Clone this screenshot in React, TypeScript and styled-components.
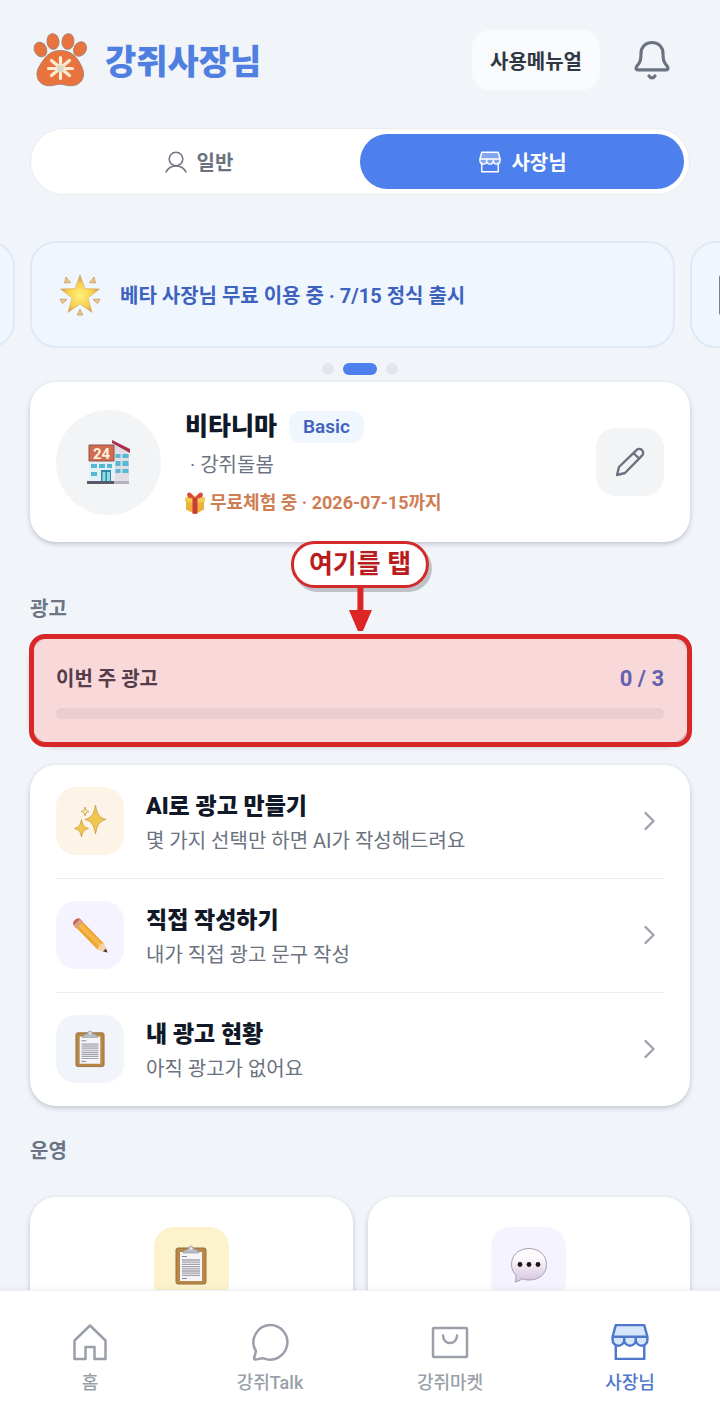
import React from "react";
import styled, { createGlobalStyle, css } from "styled-components";

const GlobalStyle = createGlobalStyle`
  *, *::before, *::after { box-sizing: border-box; }
  body {
    margin: 0;
    background: #f1f5fa;
    color: #111827;
    font-family: Roboto, "Noto Sans CJK KR", sans-serif;
    font-size: 20px;
  }
  button { font: inherit; color: inherit; border: 0; padding: 0; cursor: pointer; }
  a { color: inherit; text-decoration: none; }
  h1, h2, h3, p { margin: 0; }
  svg { display: block; flex: none; }
`;

const cardSurface = css`
  background: #fff;
  border-radius: 26px;
  box-shadow: 0 2px 5px rgba(30, 41, 59, 0.24);
`;

const Shell = styled.div`
  display: flex;
  flex-direction: column;
  height: 100vh;
`;

const Content = styled.main`
  flex: 1;
  min-height: 0;
  overflow-x: hidden;
  overflow-y: auto;
  scrollbar-width: none;
  padding: 30px 30px 0;
`;

const Header = styled.header`
  display: flex;
  align-items: center;
  justify-content: space-between;
`;

const Brand = styled.div`
  display: flex;
  align-items: center;
  gap: 16px;
  padding-left: 2px;
`;

const BrandName = styled.h1`
  padding-top: 4px;
  font-size: 34px;
  line-height: 44px;
  font-weight: 900;
  color: #4f7fe0;
`;

const HeaderActions = styled.div`
  display: flex;
  align-items: center;
  gap: 30px;
  padding-right: 16px;
`;

const ManualButton = styled.button`
  height: 60px;
  padding: 0 18px;
  border-radius: 18px;
  background: #f9fafb;
  color: #2f3744;
  font-weight: 700;
`;

const IconButton = styled.button`
  display: grid;
  place-items: center;
  width: 44px;
  height: 44px;
  background: none;
`;

const Segmented = styled.div`
  display: grid;
  grid-template-columns: 1fr 1fr;
  margin-top: 38px;
  padding: 5px;
  border: 1px solid #e8ebf0;
  border-radius: 34px;
  background: #fff;
`;

const Segment = styled.button<{ $active?: boolean }>`
  display: flex;
  align-items: center;
  justify-content: center;
  gap: 10px;
  height: 55px;
  padding-left: 2px;
  border-radius: 28px;
  font-weight: 700;
  background: ${(p) => (p.$active ? "#4d80ec" : "transparent")};
  color: ${(p) => (p.$active ? "#fff" : "#6b7280")};
`;

const Carousel = styled.section`
  margin-top: 46px;
`;

const Track = styled.div`
  display: grid;
  grid-auto-flow: column;
  grid-auto-columns: calc(100% - 15px);
  gap: 15px;
  transform: translateX(-100%);
`;

const Slide = styled.article`
  display: flex;
  align-items: center;
  gap: 19px;
  height: 107px;
  padding: 0 27px;
  border: 2px solid #dfe9f6;
  border-radius: 26px;
  background: #eff6fe;
  color: #3d62c0;
  font-weight: 700;
`;

const Dots = styled.div`
  display: flex;
  justify-content: center;
  gap: 9px;
  margin: 15px 0 7px;
`;

const Dot = styled.button<{ $active?: boolean }>`
  width: ${(p) => (p.$active ? 34 : 12)}px;
  height: 12px;
  border-radius: 6px;
  background: ${(p) => (p.$active ? "#4d80ec" : "#e3e7ec")};
`;

const ProfileCard = styled.section`
  ${cardSurface}
  display: flex;
  align-items: center;
  height: 160px;
  padding: 0 26px;
`;

const Avatar = styled.div`
  display: grid;
  place-items: center;
  width: 105px;
  height: 105px;
  border-radius: 50%;
  background: #f3f4f6;
`;

const ProfileText = styled.div`
  flex: 1;
  display: grid;
  gap: 4px;
  margin-left: 24px;
  padding-top: 6px;
`;

const NameRow = styled.div`
  display: flex;
  align-items: center;
  gap: 12px;
  line-height: 34px;
`;

const Name = styled.h2`
  font-size: 25px;
  line-height: 34px;
  font-weight: 900;
`;

const Badge = styled.span`
  padding: 0 14px;
  border-radius: 12px;
  background: #eff6fe;
  color: #4263bd;
  font-size: 19px;
  line-height: 32px;
  font-weight: 600;
`;

const Category = styled.p`
  padding-left: 5px;
  line-height: 34px;
  color: #6b7280;
`;

const Trial = styled.p`
  display: flex;
  align-items: center;
  gap: 5px;
  line-height: 34px;
  font-size: 18px;
  font-weight: 700;
  color: #cf7d52;
`;

const EditButton = styled.button`
  display: grid;
  place-items: center;
  width: 68px;
  height: 68px;
  border-radius: 20px;
  background: #f3f4f6;
`;

const SectionTitle = styled.h2<{ $tall?: boolean }>`
  margin: ${(p) => (p.$tall ? "30px 0 31px" : "52px 0 12px")};
  line-height: 30px;
  font-size: 20px;
  font-weight: 700;
  color: #6b7585;
`;

const QuotaCard = styled.section`
  ${cardSurface}
  position: relative;
  height: 109px;
  padding: 27px 26px 0;
`;

const QuotaHead = styled.div`
  display: flex;
  justify-content: space-between;
  line-height: 32px;
  font-weight: 700;
  color: #374151;
`;

const QuotaCount = styled.span`
  font-size: 22px;
  color: #4a70cf;
`;

const QuotaBar = styled.div`
  height: 11px;
  margin-top: 13px;
  border-radius: 6px;
  background: #f0f1f4;
`;

const Spotlight = styled.div`
  position: absolute;
  inset: -2px -2px -2px -1px;
  border: 5px solid #d92626;
  border-radius: 16px;
  background: rgba(217, 38, 46, 0.18);
`;

const Callout = styled.div`
  position: absolute;
  left: 50%;
  bottom: 100%;
  transform: translateX(-50%);
  display: flex;
  flex-direction: column;
  align-items: center;
  margin-bottom: 5px;
`;

const CalloutLabel = styled.span`
  padding: 0 15px;
  border: 3px solid #d32a2a;
  border-radius: 24px;
  background: #fff;
  box-shadow: 3px 4px 0 #bfc2c7;
  color: #b91c1c;
  font-size: 26px;
  line-height: 41px;
  font-weight: 700;
  white-space: nowrap;
`;

const MenuCard = styled.ul`
  ${cardSurface}
  list-style: none;
  margin: 20px 0 0;
  padding: 0 26px;
`;

const MenuItem = styled.li`
  & + & { border-top: 1px solid #eceef1; }
`;

const MenuLink = styled.a`
  display: flex;
  align-items: center;
  gap: 22px;
  padding: 19px 6px 20px 0;
`;

const Tile = styled.span<{ $tint: string; $large?: boolean }>`
  display: grid;
  place-items: center;
  width: ${(p) => (p.$large ? 75 : 68)}px;
  height: ${(p) => (p.$large ? 75 : 68)}px;
  border-radius: 20px;
  background: ${(p) => p.$tint};
`;

const MenuText = styled.span`
  flex: 1;
  display: grid;
  padding-top: 6px;
`;

const MenuTitle = styled.strong`
  font-size: 23px;
  line-height: 34px;
  font-weight: 900;
`;

const MenuNote = styled.span`
  line-height: 34px;
  color: #6b7280;
`;

const OpsGrid = styled.div`
  display: grid;
  grid-template-columns: 1fr 1fr;
  gap: 15px;
`;

const OpsCard = styled.a`
  ${cardSurface}
  display: grid;
  justify-items: center;
  padding: 30px 20px;
`;

const TabBar = styled.nav`
  position: relative;
  display: grid;
  grid-template-columns: repeat(4, 1fr);
  height: 120px;
  padding-top: 32px;
  border-top: 1px solid #eef0f3;
  background: #fff;
  box-shadow: 0 -2px 5px rgba(30, 41, 59, 0.05);
`;

const Tab = styled.a<{ $active?: boolean }>`
  display: flex;
  flex-direction: column;
  align-items: center;
  gap: 8px;
  font-size: 18px;
  line-height: 28px;
  font-weight: 500;
  color: ${(p) => (p.$active ? "#4f78cb" : "#9a9fa9")};
`;

const PawLogo = () => (
  <svg width="57" height="56" viewBox="0 0 57 56" aria-hidden="true">
    <g fill="#e9733f" stroke="#a9826c" strokeWidth="1">
      <ellipse cx="8.500" cy="17.500" rx="6" ry="7.500" transform="rotate(-28 8.500 17.500)" />
      <ellipse cx="21" cy="9.500" rx="6" ry="7.800" transform="rotate(-8 21 9.500)" />
      <ellipse cx="36" cy="9.500" rx="6" ry="7.800" transform="rotate(8 36 9.500)" />
      <ellipse cx="48" cy="17" rx="6" ry="7.500" transform="rotate(32 48 17)" />
      <path d="M28.500 18.500c-8 0-13.500 4-17 9.500C7.500 33.500 5 37.500 5 42c0 7.500 5.500 11.800 12.500 11.800 4.500 0 6.500-1.600 10.500-1.600s6 1.600 10.500 1.600C46 53.800 51.500 49.500 51.500 42c0-4.500-2-8.500-5.500-14-3.500-5.500-9.500-9.500-17.500-9.500z" />
    </g>
    <g stroke="#fbecd2" strokeWidth="3.200" strokeLinecap="round">
      <path d="M28.500 25.500v21M16.500 36.500h24M19.500 28.500l18 15M37.500 28.500l-18 15" />
    </g>
    <circle cx="28.500" cy="36.500" r="3.500" fill="#d9d9c5" />
  </svg>
);

const BellIcon = () => (
  <svg width="40" height="42" viewBox="0 0 40 42" fill="none" stroke="#6b7280" strokeWidth="3.200" strokeLinecap="round" strokeLinejoin="round" aria-hidden="true">
    <path d="M20 3.500C13 3.500 9 8.500 9 14.500c0 7-1 9-4 12.500-1.800 2.200-1.200 3.800 1 3.800h28c2.200 0 2.800-1.600 1-3.800-3-3.500-4-5.500-4-12.500 0-6-4-11-11-11z" />
    <path d="M17 37c1.500 2.600 4.500 2.600 6 0" />
  </svg>
);

const PersonIcon = () => (
  <svg width="22" height="22" viewBox="0 0 22 22" fill="none" stroke="currentColor" strokeWidth="1.500" strokeLinecap="round" aria-hidden="true">
    <circle cx="11" cy="8" r="6.800" />
    <path d="M1 21c2-4 5.500-6 10-6s8 2 10 6" />
  </svg>
);

const StoreIcon = ({ size, tint }: { size: number; tint: string }) => (
  <svg width={size} height={size} viewBox="0 0 36 36" fill="none" stroke="currentColor" strokeWidth="2.300" strokeLinejoin="round" aria-hidden="true">
    <path d="M4.500 19v15h27V19" />
    <path d="M4.500 2h27l3 11v3a5 5 0 0 1-11 0 5.500 5.500 0 0 1-11 0 5 5 0 0 1-11 0v-3z" fill={tint} />
    <path d="M1.500 13h33M12.500 13v3M23.500 13v3" />
  </svg>
);

const HomeIcon = () => (
  <svg width="36" height="38" viewBox="0 0 36 38" fill="none" stroke="currentColor" strokeWidth="2.500" strokeLinejoin="round" aria-hidden="true">
    <path d="M2.500 17.500 18 2.500l15.500 15V36h-11V24h-9v12h-11z" />
  </svg>
);

const TalkIcon = () => (
  <svg width="38" height="38" viewBox="0 0 38 38" fill="none" stroke="currentColor" strokeWidth="2.500" strokeLinejoin="round" aria-hidden="true">
    <path d="M19 2a17.300 17.300 0 1 1-6.500 33.300c-2.800-.6-6 1.700-8.500 1.200-2.500-.6.800-4.500.8-8.500A17.300 17.300 0 0 1 19 2z" />
  </svg>
);

const MarketIcon = () => (
  <svg width="38" height="38" viewBox="0 0 38 38" fill="none" stroke="currentColor" strokeWidth="2.500" strokeLinejoin="round" strokeLinecap="round" aria-hidden="true">
    <rect x="2" y="5" width="34" height="29" rx="1" />
    <path d="M12 12.500c0 10 14 10 14 0" />
  </svg>
);

const EditIcon = () => (
  <svg width="30" height="30" viewBox="0 0 30 30" fill="none" stroke="#6b7280" strokeWidth="2.400" strokeLinejoin="round" strokeLinecap="round" aria-hidden="true">
    <path d="M4 20 21.500 3.200a3.800 3.800 0 0 1 5.500 5.500L10 26l-8 2zM19 6.500l5 5" />
  </svg>
);

const Chevron = () => (
  <svg width="18" height="22" viewBox="0 0 18 22" fill="none" stroke="#9ca3af" strokeWidth="2.400" strokeLinecap="round" strokeLinejoin="round" aria-hidden="true">
    <path d="m5.500 3 8 8-8 8" />
  </svg>
);

const StarEmoji = () => (
  <svg width="42" height="42" viewBox="0 0 42 42" aria-hidden="true">
    <defs>
      <radialGradient id="star" cx="50%" cy="55%" r="55%">
        <stop offset="0" stopColor="#fff07a" />
        <stop offset=".6" stopColor="#f8cf4e" />
        <stop offset="1" stopColor="#c98b42" />
      </radialGradient>
    </defs>
    <path d="m21 1 5 13.500 14.500.5L29 24l4 14.500-12-8.500L9 38.500 13 24 1.500 15l14.500-.5z" fill="url(#star)" stroke="#d7a053" strokeWidth=".5" />
    <g fill="#edc98b" stroke="#c99858" strokeWidth=".8" strokeLinejoin="round">
      <path d="m7 3 4.500 5.500L5.500 9zM35 3l-4.500 5.500 6 .5zM1 25l7 .5-4.500 4zM41 25l-7 .5 4.500 4zM21 35.500l2.800 5.500h-5.600z" />
    </g>
  </svg>
);

const StoreEmoji = () => (
  <svg width="44" height="46" viewBox="0 0 44 46" aria-hidden="true">
    <path d="M27 4v40h15V13z" fill="#e1dde7" />
    <path d="M2 20h26v23H2z" fill="#e4f0f6" />
    <path d="M2 6h25v16H2z" fill="#d36c4f" stroke="#8a5448" strokeWidth="1" />
    <path d="m25 1 18 9v4L25 4z" fill="#ab304d" />
    <text x="14.500" y="19.500" textAnchor="middle" fontSize="15" fontWeight="700" fill="#fff3df">24</text>
    <g fill="#55b9d3">
      <path d="M4 25h6v4H4zM12 25h6v4h-6zM20 25h5v4h-5zM4 33h6v4H4zM28.500 15h5v4h-5zM35.500 15h6v4h-6zM28.500 22h5v5h-5zM35.500 22h6v5h-6zM28.500 30h5v4h-5zM35.500 30h6v4h-6z" />
    </g>
    <path d="M14 31h10v12H14z" fill="#3487a7" />
    <path d="M15.500 33h3v9h-3zM20 33h3v9h-3z" fill="#8edbea" />
    <path d="M0 42h27v3H0z" fill="#555b68" />
    <path d="M27 42h15v3H27z" fill="#b7b0bf" />
  </svg>
);

const GiftEmoji = () => (
  <svg width="20" height="22" viewBox="0 0 20 22" aria-hidden="true">
    <path d="M1 7.500 10 10l9-2.500v10L10 22l-9-4.500z" fill="#eeb03c" />
    <path d="m0 5.500 10-2 10 2v4L10 12 0 9.500z" fill="#f5c84f" />
    <path d="M7.500 6h5v15.500L10 22l-2.500-.5z" fill="#c93c35" />
    <path d="M10 6C5-2 1 0 2.500 4.500 4 7 8 6 10 6zM10 6c5-8 9-6 7.500-1.500C16 7 12 6 10 6z" fill="#d94a3b" />
  </svg>
);

const SparklesEmoji = () => (
  <svg width="34" height="34" viewBox="0 0 34 34" fill="#f0c64f" stroke="#c69b4a" strokeWidth=".8" strokeLinejoin="round" aria-hidden="true">
    <path d="M22.500 1c1.500 9 3.500 12.500 10.500 14.500-7 2-9 5.500-10.500 14.500-1.500-9-3.500-12.500-10.500-14.500 7-2 9-5.500 10.500-14.500z" />
    <path d="M8.500 15.500c1 5.500 2.500 7.500 7 9-4.500 1.500-6 3.300-7 8.500-1-5.200-2.500-7-7-8.500 4.500-1.500 6-3.500 7-9z" />
    <path d="M12 3c.6 3 1.400 4 4 4.500-2.600.5-3.400 1.500-4 4.500-.6-3-1.400-4-4-4.500 2.600-.5 3.400-1.500 4-4.500z" fill="#fae6a6" />
  </svg>
);

const PencilEmoji = () => (
  <svg width="38" height="38" viewBox="0 0 38 38" aria-hidden="true">
    <path d="M8.500 2.500 32.500 27l4 9.500-10-3L2.500 9z" fill="#f0a334" />
    <path d="m7 4 25 25-3 3L4 7z" fill="#f7bf4f" opacity=".7" />
    <path d="M2.500 9C.5 6.500 5 1.500 8.500 2.500l3 3L5.500 12z" fill="#c76555" />
    <path d="m9 3 3 3-6.500 6.500-3-3z" fill="#d7a283" />
    <path d="m32.500 27 4 9.500-10-3c.5-3 3-6 6-6.500z" fill="#f3d4a0" />
    <path d="m35 32.500 1.500 4-4.500-1z" fill="#493e42" />
  </svg>
);

const ClipboardEmoji = ({ size }: { size: number }) => (
  <svg width={size} height={size * 1.25} viewBox="0 0 32 40" aria-hidden="true">
    <rect x="1" y="3" width="30" height="36" rx="2" fill="#b98745" stroke="#98703f" />
    <path d="M5 7h22v29H5z" fill="#f5f4f8" />
    <path d="M8 8c0-3 3-3 5-4 1-4 5-4 6 0 2 1 5 1 5 4z" fill="#b8bcc5" stroke="#9296a0" strokeWidth=".6" />
    <circle cx="16" cy="3.500" r="1.200" fill="#eceef2" />
    <path d="M7 11.500h5M7 33.500h5" stroke="#858492" strokeWidth="1" />
    <path d="M7 15h18M7 17.200h18M7 19.400h18M7 21.600h18M7 23.800h18M7 26h18M7 28.200h18M7 30.400h18" stroke="#a4a2ad" strokeWidth="1.300" />
  </svg>
);

const SpeechEmoji = () => (
  <svg width="38" height="36" viewBox="0 0 38 36" aria-hidden="true">
    <defs>
      <linearGradient id="speech" x1="0" y1="0" x2="0" y2="1">
        <stop offset=".3" stopColor="#fbf9fc" />
        <stop offset="1" stopColor="#d5c2dd" />
      </linearGradient>
    </defs>
    <path d="M19 1.500c10 0 17.500 6.500 17.500 16S29 33 19 33c-2.500 0-5-.4-7-1.200-1.800 1.600-4.500 2.900-7 3.200 1-2.200 1.300-4.500.8-7C3 25 1.500 21.500 1.500 17.500c0-9.500 7.500-16 17.500-16z" fill="url(#speech)" stroke="#a9a2ad" />
    <g fill="#191719"><circle cx="10" cy="17.500" r="2.400" /><circle cx="19" cy="17.500" r="2.400" /><circle cx="28" cy="17.500" r="2.400" /></g>
  </svg>
);

const PhoneEmoji = () => (
  <svg width="42" height="42" viewBox="0 0 42 42" aria-hidden="true">
    <rect x="0" y="1" width="40" height="40" rx="2" fill="#7d8289" />
  </svg>
);

const ArrowDown = () => (
  <svg width="23" height="43" viewBox="0 0 23 43" fill="#dc2626" aria-hidden="true">
    <path d="M8.500 0h6v22H23L14 43H9L0 22h8.500z" />
  </svg>
);

const menu = [
  { title: "AI로 광고 만들기", note: "몇 가지 선택만 하면 AI가 작성해드려요", tint: "#fdf3e6", icon: <SparklesEmoji /> },
  { title: "직접 작성하기", note: "내가 직접 광고 문구 작성", tint: "#f5f3ff", icon: <PencilEmoji /> },
  { title: "내 광고 현황", note: "아직 광고가 없어요", tint: "#f1f5fa", icon: <ClipboardEmoji size={30} /> },
];

const tabs = [
  { label: "홈", icon: <HomeIcon /> },
  { label: "강쥐Talk", icon: <TalkIcon /> },
  { label: "강쥐마켓", icon: <MarketIcon /> },
  { label: "사장님", icon: <StoreIcon size={38} tint="#d6e6fb" />, active: true },
];

export default function App() {
  return (
    <Shell>
      <GlobalStyle />
      <Content>
        <Header>
          <Brand>
            <PawLogo />
            <BrandName>강쥐사장님</BrandName>
          </Brand>
          <HeaderActions>
            <ManualButton type="button">사용메뉴얼</ManualButton>
            <IconButton type="button" aria-label="알림">
              <BellIcon />
            </IconButton>
          </HeaderActions>
        </Header>

        <Segmented>
          <Segment type="button" aria-pressed="false">
            <PersonIcon />
            일반
          </Segment>
          <Segment type="button" aria-pressed="true" $active>
            <StoreIcon size={22} tint="rgba(255,255,255,0.3)" />
            사장님
          </Segment>
        </Segmented>

        <Carousel>
          <Track>
            <Slide />
            <Slide>
              <StarEmoji />
              <p>베타 사장님 무료 이용 중 · 7/15 정식 출시</p>
            </Slide>
            <Slide>
              <PhoneEmoji />
            </Slide>
          </Track>
          <Dots>
            <Dot type="button" aria-label="1" />
            <Dot type="button" aria-label="2" $active />
            <Dot type="button" aria-label="3" />
          </Dots>
        </Carousel>

        <ProfileCard>
          <Avatar>
            <StoreEmoji />
          </Avatar>
          <ProfileText>
            <NameRow>
              <Name>비타니마</Name>
              <Badge>Basic</Badge>
            </NameRow>
            <Category>· 강쥐돌봄</Category>
            <Trial>
              <GiftEmoji />
              무료체험 중 · 2026-07-15까지
            </Trial>
          </ProfileText>
          <EditButton type="button" aria-label="수정">
            <EditIcon />
          </EditButton>
        </ProfileCard>

        <SectionTitle>광고</SectionTitle>
        <QuotaCard>
          <QuotaHead>
            <span>이번 주 광고</span>
            <QuotaCount>0 / 3</QuotaCount>
          </QuotaHead>
          <QuotaBar role="progressbar" aria-label="이번 주 광고" aria-valuemin={0} aria-valuemax={3} aria-valuenow={0} />
          <Spotlight />
          <Callout>
            <CalloutLabel>여기를 탭</CalloutLabel>
            <ArrowDown />
          </Callout>
        </QuotaCard>

        <MenuCard>
          {menu.map((item) => (
            <MenuItem key={item.title}>
              <MenuLink href="#">
                <Tile $tint={item.tint}>{item.icon}</Tile>
                <MenuText>
                  <MenuTitle>{item.title}</MenuTitle>
                  <MenuNote>{item.note}</MenuNote>
                </MenuText>
                <Chevron />
              </MenuLink>
            </MenuItem>
          ))}
        </MenuCard>

        <SectionTitle $tall>운영</SectionTitle>
        <OpsGrid>
          <OpsCard href="#" aria-label="운영 현황">
            <Tile $tint="#fcf2cc" $large>
              <ClipboardEmoji size={32} />
            </Tile>
          </OpsCard>
          <OpsCard href="#" aria-label="대화">
            <Tile $tint="#f5f3ff" $large>
              <SpeechEmoji />
            </Tile>
          </OpsCard>
        </OpsGrid>
      </Content>

      <TabBar>
        {tabs.map((tab) => (
          <Tab key={tab.label} href="#" $active={tab.active} aria-current={tab.active ? "page" : undefined}>
            {tab.icon}
            {tab.label}
          </Tab>
        ))}
      </TabBar>
    </Shell>
  );
}
